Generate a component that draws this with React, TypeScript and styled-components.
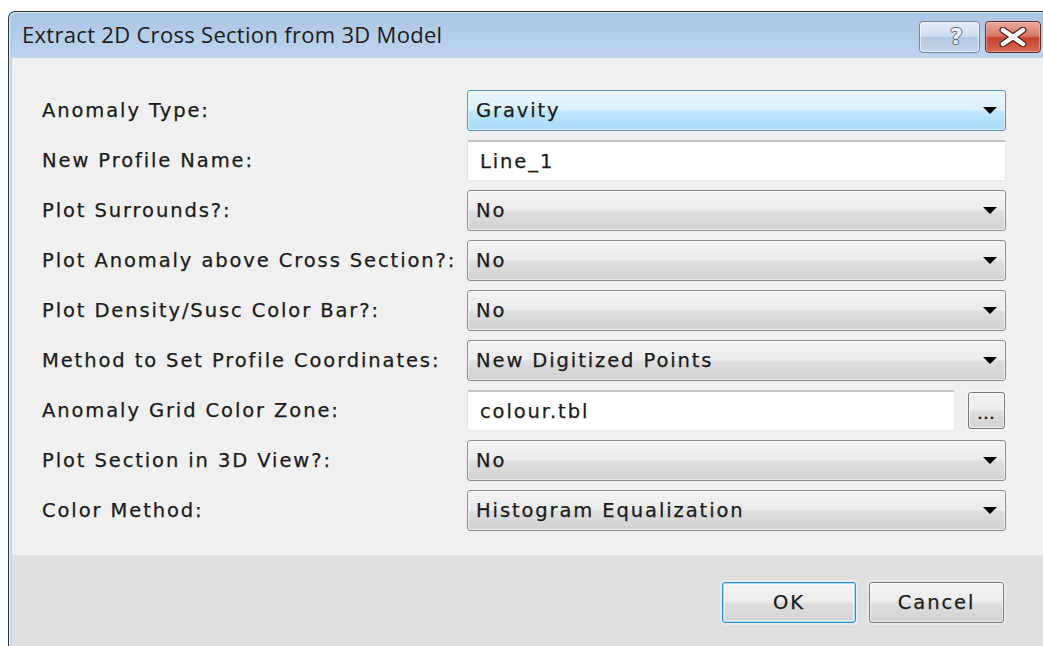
import React from "react";
import styled, { createGlobalStyle, css } from "styled-components";

const GlobalStyle = createGlobalStyle`
  html, body {
    margin: 0;
    padding: 0;
    background: #ffffff;
  }
  body {
    overflow: hidden;
  }
  #root {
    width: 1043px;
    height: 646px;
    overflow: hidden;
  }
`;

const uiFont = `"DejaVu Sans", Verdana, sans-serif`;

const uiText = css`
  font-family: ${uiFont};
  font-size: 19.5px;
  letter-spacing: 1.9px;
  color: #1a1a1a;
  -webkit-text-stroke: 0.25px #1a1a1a;
`;

const Desktop = styled.div`
  width: 1043px;
  height: 646px;
  box-sizing: border-box;
  padding: 11px 0 0 8px;
  overflow: hidden;
  background: #ffffff;
`;

const Window = styled.div`
  width: 1042px;
  height: 660px;
  box-sizing: border-box;
  border: 1px solid #353535;
  border-bottom: none;
  border-radius: 7px 7px 0 0;
  padding: 0 3px;
  background: linear-gradient(180deg, #abc5e3 0px, #bcd4ee 46px, #c3d8ef 60px, #c3d8ef 100%);
  box-shadow: inset 1px 1px 0 rgba(255, 255, 255, 0.55);
  display: flex;
  flex-direction: column;
`;

const TitleBar = styled.div`
  height: 46px;
  flex: none;
  display: flex;
  align-items: center;
  padding-left: 10px;
`;

const Title = styled.div`
  font-family: "Open Sans", "Noto Sans", sans-serif;
  font-size: 22px;
  letter-spacing: 0.3px;
  color: #1b1b1b;
  padding-bottom: 3px;
`;

const CaptionButtons = styled.div`
  margin-left: auto;
  margin-right: 5px;
  align-self: flex-start;
  margin-top: 9px;
  display: flex;
  gap: 5px;
`;

const CaptionButton = styled.div<{ $kind: "help" | "close" }>`
  height: 32px;
  box-sizing: border-box;
  border-radius: 4px;
  display: flex;
  align-items: center;
  justify-content: center;
  ${({ $kind }) =>
    $kind === "help"
      ? css`
          width: 61px;
          padding-left: 14px;
          border: 1px solid #7489a6;
          background: linear-gradient(180deg, #e3ecf7 0%, #cfdcee 48%, #b3c8e2 52%, #c4d6ec 100%);
          box-shadow: inset 0 0 0 1px rgba(255, 255, 255, 0.6);
        `
      : css`
          width: 56px;
          border: 1px solid #6a2a22;
          background: linear-gradient(180deg, #e9aa9d 0%, #d97a6a 45%, #c7432f 55%, #d66a55 100%);
          box-shadow: inset 0 0 0 1px rgba(255, 210, 200, 0.45);
        `}
`;

const HelpGlyph = styled.span`
  font-family: "DejaVu Sans", sans-serif;
  font-weight: bold;
  font-size: 22px;
  line-height: 1;
  color: #eef3f9;
  text-shadow: 1px 0 #5a697e, -1px 0 #5a697e, 0 1px #5a697e, 0 -1px #5a697e;
`;

const Body = styled.div`
  background: #f0f0f0;
  padding: 32px 0 24px 30px;
`;

const Form = styled.div`
  display: grid;
  grid-template-columns: 425px 539px;
  grid-auto-rows: 41px;
  row-gap: 9px;
`;

const Label = styled.div`
  ${uiText};
  display: flex;
  align-items: center;
  white-space: nowrap;
`;

const Select = styled.div<{ $focused?: boolean }>`
  ${uiText};
  box-sizing: border-box;
  border-radius: 3px;
  display: flex;
  align-items: center;
  padding: 0 8px;
  ${({ $focused }) =>
    $focused
      ? css`
          border: 1px solid #5b8fbd;
          background: linear-gradient(180deg, #eaf6fd 0%, #dbf0fc 48%, #bee6fd 52%, #a9dbf6 100%);
          box-shadow: inset 0 0 0 1px rgba(255, 255, 255, 0.55);
        `
      : css`
          border: 1px solid #8c8c8c;
          background: linear-gradient(180deg, #f3f3f3 0%, #ececec 48%, #dedede 52%, #d2d2d2 100%);
          box-shadow: inset 0 0 0 1px rgba(255, 255, 255, 0.6);
        `}
`;

const SelectValue = styled.span`
  flex: 1;
`;

const Arrow = () => (
  <svg width="14" height="7" viewBox="0 0 14 7">
    <path d="M0 0H14L7 7Z" fill="#000" />
  </svg>
);

const TextBox = styled.div`
  ${uiText};
  flex: 1;
  box-sizing: border-box;
  height: 100%;
  background: #ffffff;
  border: 1px solid;
  border-color: #c2c4c8 #e3e9ef #e3e9ef #e2e3ea;
  border-top-width: 2px;
  border-radius: 2px;
  display: flex;
  align-items: center;
  padding-left: 12px;
`;

const FieldRow = styled.div`
  display: flex;
  align-items: center;
  gap: 13px;
`;

const winButton = css`
  box-sizing: border-box;
  border: 1px solid #777777;
  border-radius: 3px;
  background: linear-gradient(180deg, #f3f3f3 0%, #ececec 48%, #dedede 52%, #d2d2d2 100%);
  box-shadow: inset 0 0 0 1px rgba(255, 255, 255, 0.65), 0 0 0 2px rgba(255, 255, 255, 0.35);
  display: flex;
  align-items: center;
  justify-content: center;
`;

const BrowseButton = styled.div`
  ${winButton};
  font-family: ${uiFont};
  color: #1b1b1b;
  width: 37px;
  height: 37px;
  margin-right: 1px;
  font-size: 13px;
  font-weight: bold;
  letter-spacing: 1px;
  padding-top: 8px;
`;

const Footer = styled.div`
  flex: 1;
  background: #dfdfdf;
  display: flex;
  justify-content: flex-end;
  align-items: flex-start;
  gap: 13px;
  padding: 27px 42px 0 0;
`;

const DialogButton = styled.div<{ $default?: boolean }>`
  ${winButton};
  ${uiText};
  width: ${({ $default }) => ($default ? 134 : 135)}px;
  height: 41px;
  ${({ $default }) =>
    $default &&
    css`
      border-color: #2f8fd0;
      box-shadow: inset 0 0 0 1px #9fdcfb, inset 0 0 0 2px rgba(255, 255, 255, 0.5),
        0 0 0 2px rgba(255, 255, 255, 0.35);
    `}
`;

type Field =
  | { label: string; kind: "select"; value: string; focused?: boolean }
  | { label: string; kind: "text"; value: string; browse?: boolean };

const fields: Field[] = [
  { label: "Anomaly Type:", kind: "select", value: "Gravity", focused: true },
  { label: "New Profile Name:", kind: "text", value: "Line_1" },
  { label: "Plot Surrounds?:", kind: "select", value: "No" },
  { label: "Plot Anomaly above Cross Section?:", kind: "select", value: "No" },
  { label: "Plot Density/Susc Color Bar?:", kind: "select", value: "No" },
  { label: "Method to Set Profile Coordinates:", kind: "select", value: "New Digitized Points" },
  { label: "Anomaly Grid Color Zone:", kind: "text", value: "colour.tbl", browse: true },
  { label: "Plot Section in 3D View?:", kind: "select", value: "No" },
  { label: "Color Method:", kind: "select", value: "Histogram Equalization" },
];

const CloseGlyph = () => (
  <svg width="32" height="20" viewBox="0 0 32 20">
    <path d="M6 3L26 17M26 3L6 17" stroke="#5a1c14" strokeWidth="7" strokeLinecap="round" />
    <path d="M6 3L26 17M26 3L6 17" stroke="#ffffff" strokeWidth="4.5" strokeLinecap="round" />
  </svg>
);

export default function App() {
  return (
    <>
      <GlobalStyle />
      <Desktop>
        <Window>
          <TitleBar>
            <Title>Extract 2D Cross Section from 3D Model</Title>
            <CaptionButtons>
              <CaptionButton $kind="help">
                <HelpGlyph>?</HelpGlyph>
              </CaptionButton>
              <CaptionButton $kind="close">
                <CloseGlyph />
              </CaptionButton>
            </CaptionButtons>
          </TitleBar>
          <Body>
            <Form>
              {fields.map((f) => (
                <React.Fragment key={f.label}>
                  <Label>{f.label}</Label>
                  {f.kind === "select" ? (
                    <Select $focused={f.focused}>
                      <SelectValue>{f.value}</SelectValue>
                      <Arrow />
                    </Select>
                  ) : (
                    <FieldRow>
                      <TextBox>{f.value}</TextBox>
                      {f.browse && <BrowseButton>...</BrowseButton>}
                    </FieldRow>
                  )}
                </React.Fragment>
              ))}
            </Form>
          </Body>
          <Footer>
            <DialogButton $default>OK</DialogButton>
            <DialogButton>Cancel</DialogButton>
          </Footer>
        </Window>
      </Desktop>
    </>
  );
}
